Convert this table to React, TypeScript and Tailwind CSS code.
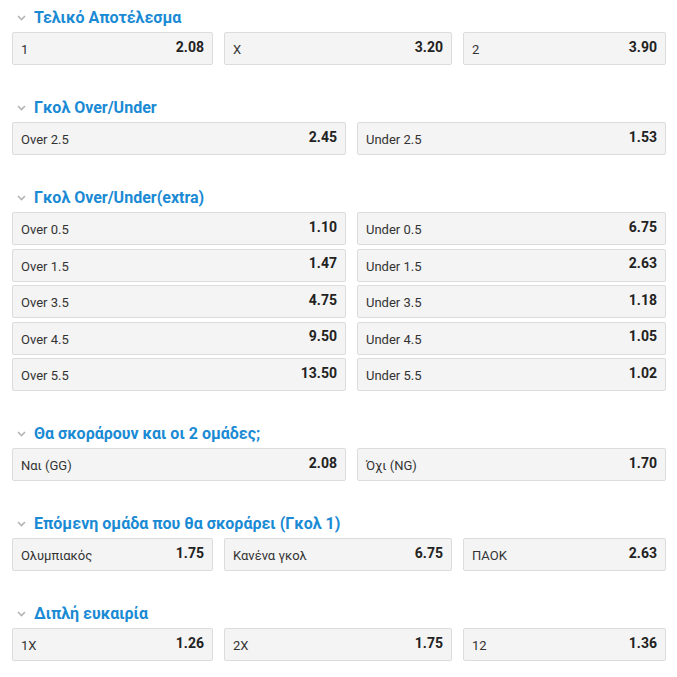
import React from 'react';

type Pick = { label: string; odd: string };

interface Market {
  title: string;
  cols: string;
  rows: Pick[][];
}

const three = 'grid-cols-[201px_228px_203px]';
const two = 'grid-cols-[334px_309px]';

const markets: Market[] = [
  {
    title: 'Τελικό Αποτέλεσμα',
    cols: three,
    rows: [[{ label: '1', odd: '2.08' }, { label: 'X', odd: '3.20' }, { label: '2', odd: '3.90' }]],
  },
  {
    title: 'Γκολ Over/Under',
    cols: two,
    rows: [[{ label: 'Over 2.5', odd: '2.45' }, { label: 'Under 2.5', odd: '1.53' }]],
  },
  {
    title: 'Γκολ Over/Under(extra)',
    cols: two,
    rows: [
      [{ label: 'Over 0.5', odd: '1.10' }, { label: 'Under 0.5', odd: '6.75' }],
      [{ label: 'Over 1.5', odd: '1.47' }, { label: 'Under 1.5', odd: '2.63' }],
      [{ label: 'Over 3.5', odd: '4.75' }, { label: 'Under 3.5', odd: '1.18' }],
      [{ label: 'Over 4.5', odd: '9.50' }, { label: 'Under 4.5', odd: '1.05' }],
      [{ label: 'Over 5.5', odd: '13.50' }, { label: 'Under 5.5', odd: '1.02' }],
    ],
  },
  {
    title: 'Θα σκοράρουν και οι 2 ομάδες;',
    cols: two,
    rows: [[{ label: 'Ναι (GG)', odd: '2.08' }, { label: 'Όχι (NG)', odd: '1.70' }]],
  },
  {
    title: 'Επόμενη ομάδα που θα σκοράρει (Γκολ 1)',
    cols: three,
    rows: [[{ label: 'Ολυμπιακός', odd: '1.75' }, { label: 'Κανένα γκολ', odd: '6.75' }, { label: 'ΠΑΟΚ', odd: '2.63' }]],
  },
  {
    title: 'Διπλή ευκαιρία',
    cols: three,
    rows: [[{ label: '1X', odd: '1.26' }, { label: '2X', odd: '1.75' }, { label: '12', odd: '1.36' }]],
  },
];

function Chevron() {
  return (
    <svg className="w-[9px] h-[6px] text-[#b4b4b4]" viewBox="0 0 9 6" fill="none">
      <path d="M1 1l3.5 3.5L8 1" stroke="currentColor" strokeWidth={1.6} />
    </svg>
  );
}

function OddCell({ pick }: { pick: Pick }) {
  return (
    <div className="h-[33px] flex items-center justify-between px-[8px] bg-[#f4f4f4] border border-[#dcdcdc] rounded-[2px]">
      <span className="text-[13px] text-[#333] pt-[3px]">{pick.label}</span>
      <span className="text-[14px] font-bold text-[#222] pb-[3px]">{pick.odd}</span>
    </div>
  );
}

export default function App() {
  return (
    <div className="w-[677px] min-h-[677px] bg-white pt-[8px] px-[12px] font-['Roboto',sans-serif]">
      <div className="flex flex-col gap-[33px]">
        {markets.map((m) => (
          <section key={m.title}>
            <div className="h-[20px] mb-[4px] flex items-center gap-[8px] pl-[5px]">
              <Chevron />
              <h2 className="text-[16px] font-bold text-[#1a8ad4] leading-[20px]">{m.title}</h2>
            </div>
            <div className="flex flex-col gap-[3.5px]">
              {m.rows.map((row, i) => (
                <div key={i} className={`grid ${m.cols} gap-[11px]`}>
                  {row.map((p) => (
                    <OddCell key={p.label} pick={p} />
                  ))}
                </div>
              ))}
            </div>
          </section>
        ))}
      </div>
    </div>
  );
}
